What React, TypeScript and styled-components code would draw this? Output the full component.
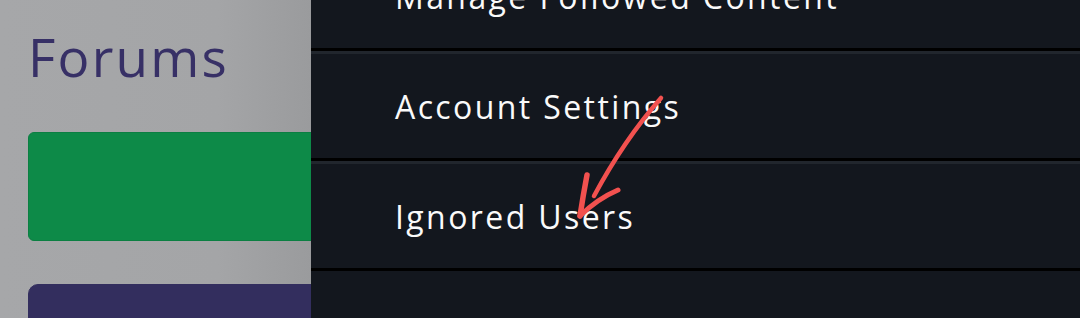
import styled, { createGlobalStyle } from "styled-components";

const GlobalStyle = createGlobalStyle`
  html, body {
    margin: 0;
    padding: 0;
    background: #a6a7a9;
  }
  body {
    font-family: "Open Sans", "Liberation Sans", sans-serif;
  }
`;

const Screen = styled.div`
  position: relative;
  display: flex;
  width: 1080px;
  height: 318px;
  overflow: hidden;
`;

const Backdrop = styled.div`
  width: 311px;
  flex: none;
  padding-left: 28px;
  box-sizing: border-box;
  overflow: hidden;
  background: linear-gradient(to right, #a6a7a9 0%, #a4a5a7 70%, #9a9b9d 100%);
`;

const Heading = styled.h1`
  margin: 21px 0 39px;
  font-size: 53px;
  font-weight: 400;
  line-height: 72px;
  letter-spacing: 2.2px;
  color: #373066;
`;

const Block = styled.div<{ $color: string; $border: string; $radius: number; $height: number }>`
  width: 340px;
  height: ${(p) => p.$height}px;
  margin-bottom: 43px;
  box-sizing: border-box;
  background: ${(p) => p.$color};
  border: 1px solid ${(p) => p.$border};
  border-radius: ${(p) => p.$radius}px;
`;

const Drawer = styled.nav`
  flex: 1;
  background: #13171e;
  overflow: hidden;
`;

const MenuList = styled.div`
  margin-top: -59px;
`;

const MenuItem = styled.div<{ $top?: boolean; $bottom?: boolean }>`
  height: 104px;
  display: flex;
  align-items: center;
  padding-left: 84px;
  font-size: 32px;
  letter-spacing: 2.4px;
  color: #fafafa;
  border-top: ${(p) => (p.$top ? "3px solid #21262d" : "none")};
  border-bottom: ${(p) => (p.$bottom ? "3px solid #000" : "none")};
`;

const Annotation = styled.svg`
  position: absolute;
  left: 0;
  top: 0;
  pointer-events: none;
`;

const items = [
  { label: "Manage Followed Content", top: true, bottom: true },
  { label: "Account Settings", top: true, bottom: true },
  { label: "Ignored Users", top: true, bottom: true },
  { label: "", top: false, bottom: false },
];

export default function App() {
  return (
    <>
      <GlobalStyle />
      <Screen>
        <Backdrop>
          <Heading>Forums</Heading>
          <Block $color="#0d8a48" $border="#0b7f42" $radius={6} $height={109} />
          <Block $color="#332e5e" $border="#332e5e" $radius={10} $height={80} />
        </Backdrop>
        <Drawer>
          <MenuList>
            {items.map((it, i) => (
              <MenuItem key={i} $top={it.top} $bottom={it.bottom}>
                {it.label}
              </MenuItem>
            ))}
          </MenuList>
        </Drawer>
        <Annotation width="1080" height="318" viewBox="0 0 1080 318">
          <g fill="none" stroke="#f2514f" strokeLinecap="round" strokeLinejoin="round">
            <path d="M661 98 Q 624 140 594 196" strokeWidth="4.5" />
            <path d="M587 175 Q 583 196 580 216" strokeWidth="5.5" />
            <path d="M618 190 Q 597 199 580 216" strokeWidth="5" />
          </g>
        </Annotation>
      </Screen>
    </>
  );
}
